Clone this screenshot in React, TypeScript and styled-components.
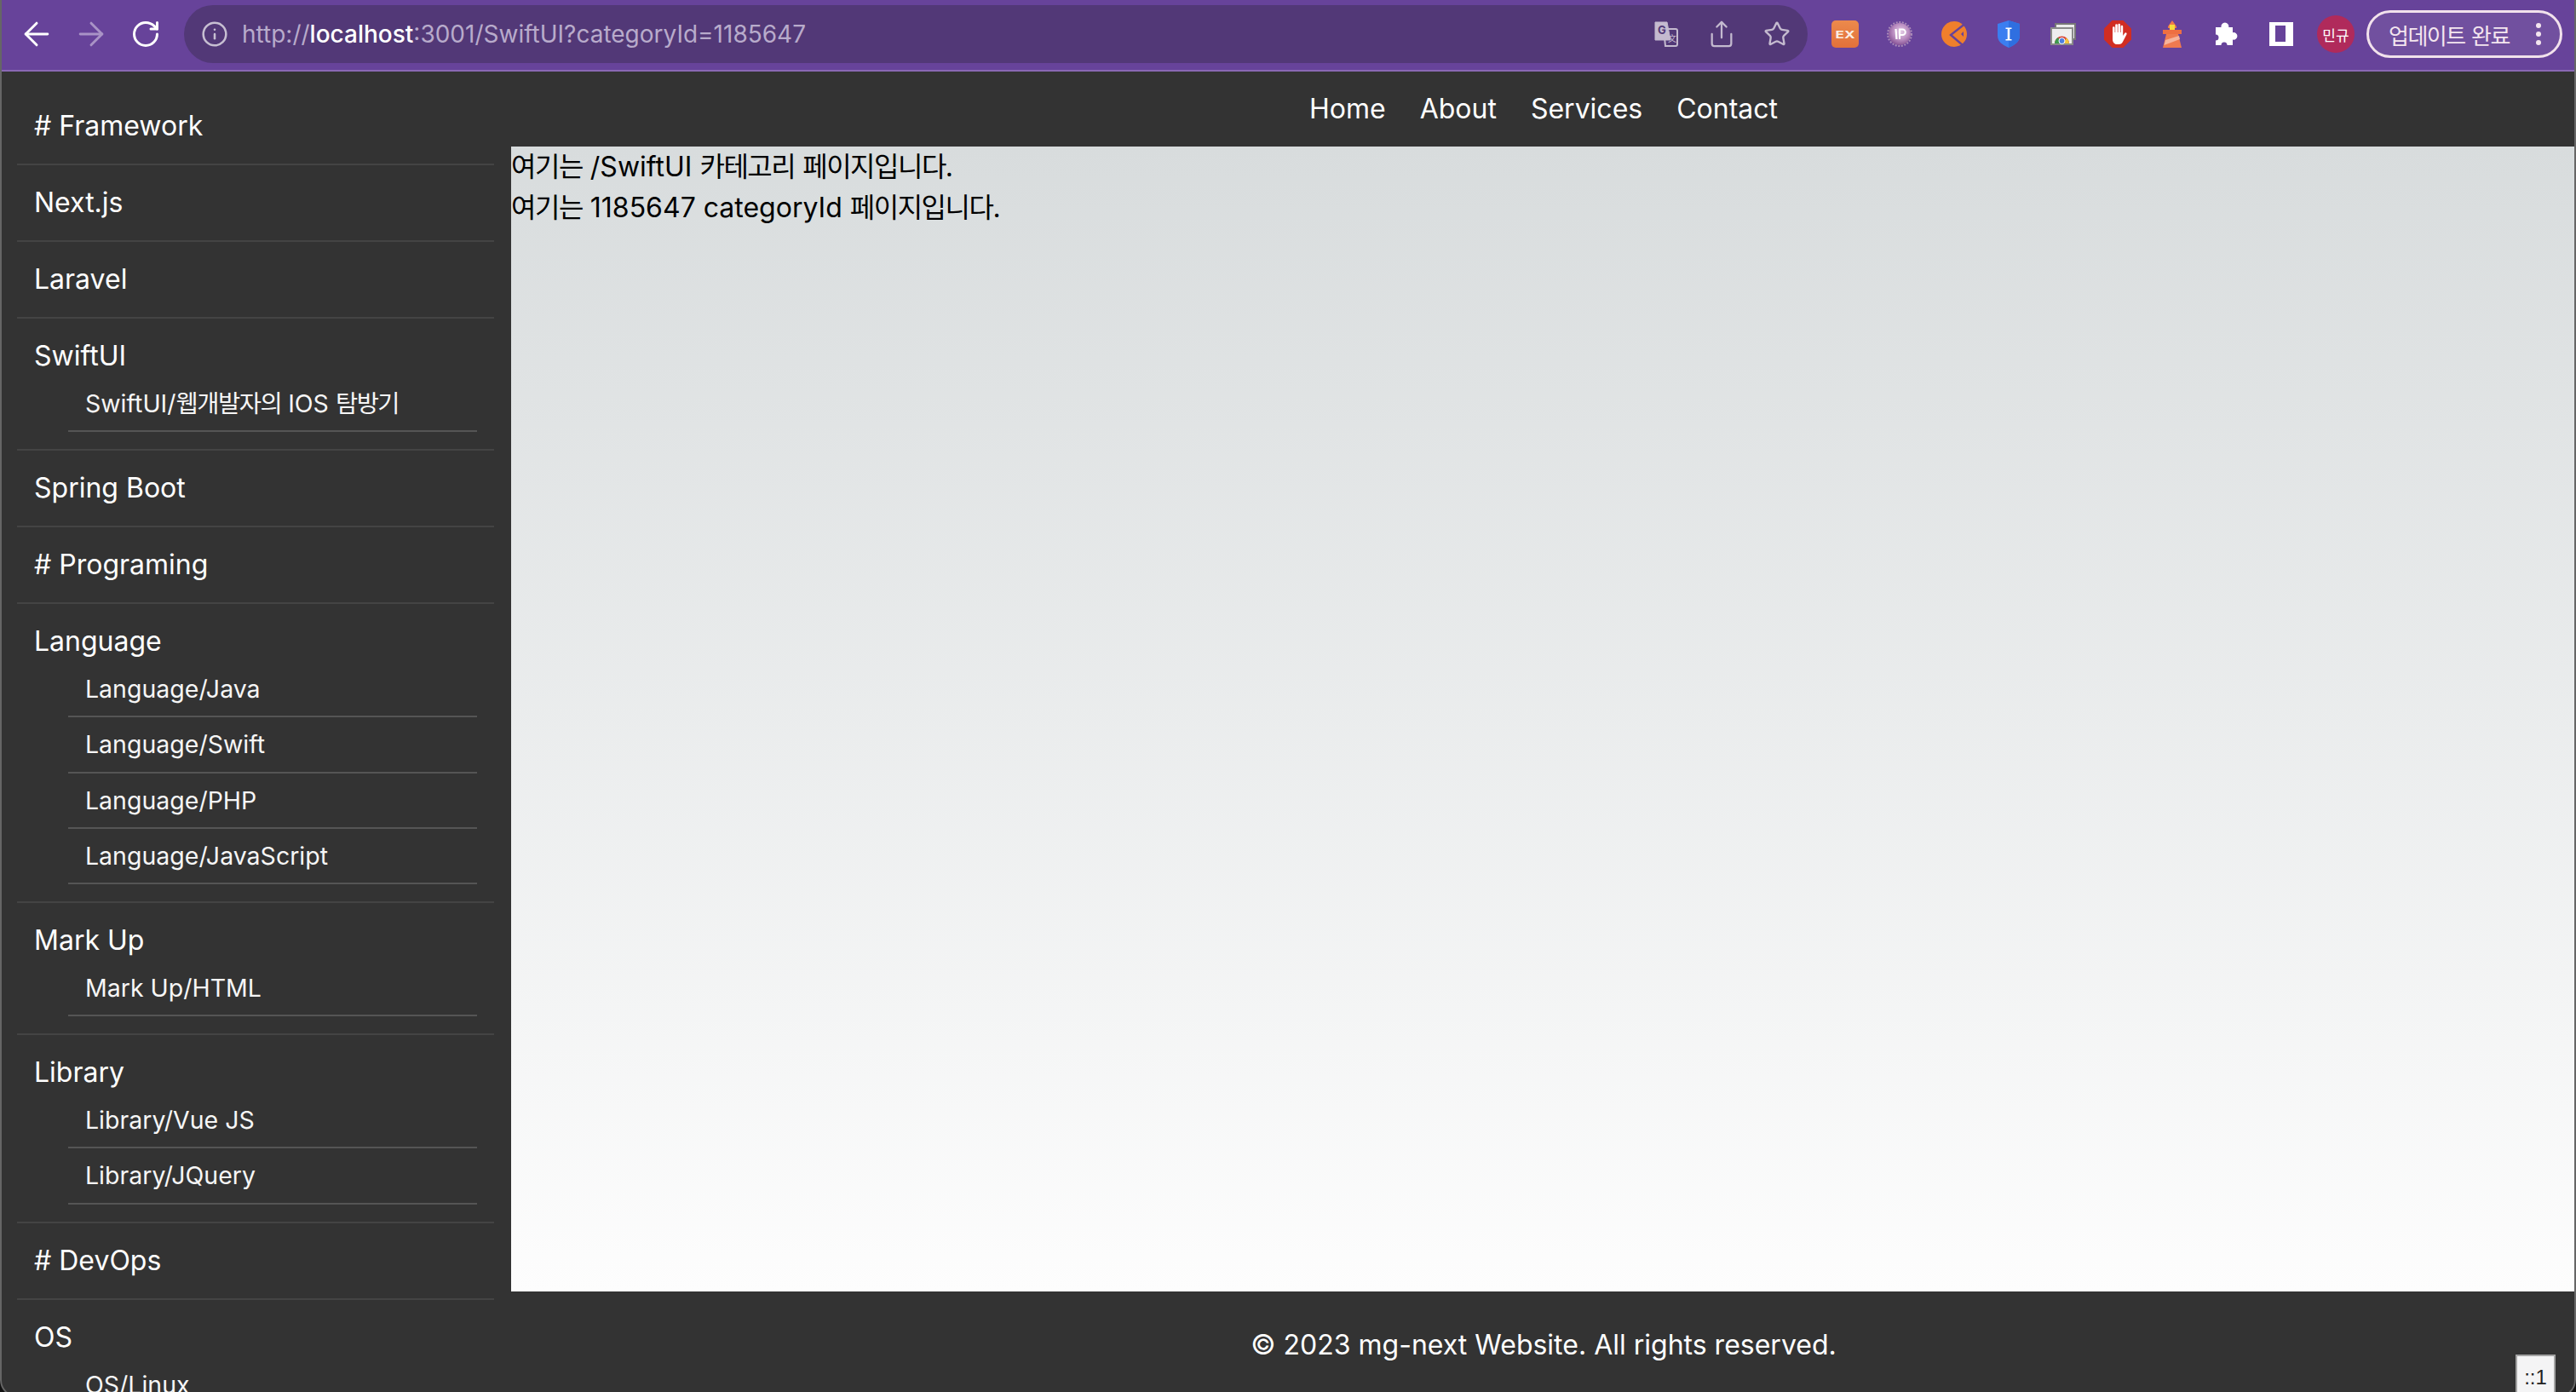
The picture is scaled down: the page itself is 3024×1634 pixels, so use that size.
import React from "react";
import styled, { createGlobalStyle } from "styled-components";
import { ArrowLeft, ArrowRight, RotateCw, Info, Share, Star } from "lucide-react";

const Global = createGlobalStyle`
  html, body { margin: 0; padding: 0; background: #111; }
  * { box-sizing: border-box; }
  ul { list-style: none; margin: 0; padding: 0; }
`;

const FONT = `Inter, "Noto Sans CJK KR", sans-serif`;

const Page = styled.div`
  width: 3024px;
  height: 1634px;
  overflow: hidden;
`;

const Win = styled.div`
  width: 3024px;
  height: 1640px;
  overflow: hidden;
  display: flex;
  flex-direction: column;
  font-family: ${FONT};
  background: #333;
  border-radius: 0 0 20px 20px;
  position: relative;
  &::after {
    content: "";
    position: absolute;
    inset: 0;
    border: 2px solid #666;
    border-top: none;
    border-radius: 0 0 20px 20px;
    pointer-events: none;
  }
`;

const Ko = styled.span`
  letter-spacing: -1.5px;
`;

const Toolbar = styled.header`
  height: 84px;
  flex: none;
  display: flex;
  align-items: flex-start;
  padding: 6px 0 0 11px;
  background: #67439a;
  border-bottom: 2px solid #8a68b4;
`;

const NavBtn = styled.div<{ $dim?: boolean }>`
  width: 64px;
  height: 68px;
  display: flex;
  align-items: center;
  justify-content: center;
  color: ${(p) => (p.$dim ? "#a993c6" : "#fff")};
`;

const Omnibox = styled.div`
  width: 1906px;
  height: 68px;
  margin-left: 13px;
  border-radius: 34px;
  background: #523877;
  display: flex;
  align-items: center;
  padding-left: 20px;
  color: #c7bfd2;
`;

const Url = styled.div`
  margin-left: 16px;
  flex: 1;
  font-size: 28px;
  color: #b8abcb;
  white-space: nowrap;
  b { font-weight: 500; color: #fff; }
`;

const OmniAction = styled.div`
  width: 65px;
  height: 68px;
  display: flex;
  align-items: center;
  justify-content: center;
  color: #c4bacf;
`;

const Omnitail = styled.div`
  display: flex;
  padding-right: 4px;
`;

const Extensions = styled.div`
  margin-left: 12px;
  height: 68px;
  display: flex;
`;

const Ext = styled.div`
  width: 64px;
  height: 68px;
  display: flex;
  align-items: center;
  justify-content: center;
  position: relative;
`;

const Avatar = styled.div`
  width: 44px;
  height: 44px;
  border-radius: 50%;
  background: #b02a5b;
  color: #fff;
  font-size: 17px;
  display: flex;
  align-items: center;
  justify-content: center;
`;

const UpdatePill = styled.div`
  margin: 6px 0 0 4px;
  width: 230px;
  height: 56px;
  border: 3px solid #f2e2ec;
  border-radius: 28px;
  background: #71509f;
  color: #f4e6ef;
  font-size: 26px;
  display: flex;
  align-items: center;
  padding-left: 23px;
  white-space: nowrap;
`;

const PillLabel = styled.span`
  width: 142px;
`;

const Dots = styled.span`
  margin-left: 31px;
  display: flex;
  flex-direction: column;
  gap: 4px;
  i { display: block; width: 6px; height: 6px; border-radius: 50%; background: #f4e6ef; }
`;

const Body = styled.div`
  flex: 1;
  min-height: 0;
  display: flex;
`;

const Sidebar = styled.aside`
  width: 600px;
  flex: none;
  padding: 20px 20px 0;
  overflow: hidden;
  color: #fff;
`;

const Item = styled.li`
  padding: 20px;
  border-bottom: 2px solid #444;
  font-size: 32px;
  line-height: 48px;
`;

const SubList = styled.ul`
  margin: 0 0 0 40px;
`;

const SubItem = styled.li`
  padding: 10px 20px;
  border-bottom: 2px solid #555;
  font-size: 28.5px;
  line-height: 43.2px;
  color: #f6f6f6;
`;

const Right = styled.div`
  flex: 1;
  min-width: 0;
  display: flex;
  flex-direction: column;
`;

const TopNav = styled.nav`
  height: 88px;
  flex: none;
  display: flex;
  align-items: center;
  justify-content: center;
  gap: 40px;
  color: #fff;
  font-size: 32px;
  padding-bottom: 2px;
`;

const Main = styled.main`
  flex: 1;
  min-height: 0;
  color: #000;
  font-size: 32px;
  line-height: 48px;
  background: linear-gradient(to bottom, #d8dcdd, #fdfdfd);
`;

const Footer = styled.footer`
  height: 124px;
  flex: none;
  display: flex;
  align-items: center;
  justify-content: center;
  color: #fff;
  font-size: 32px;
`;

const IpBadge = styled.div`
  position: absolute;
  right: 24px;
  bottom: -14px;
  width: 47px;
  height: 64px;
  border: 2px solid #a3a3a3;
  background: #f4f4f5;
  color: #222;
  font-family: "Liberation Sans", sans-serif;
  font-size: 24px;
  line-height: 28px;
  padding-top: 11px;
  text-align: center;
`;

const Hangul = ({ text }: { text: string }) => (
  <>
    {text.split(/([가-힣]+)/).map((part, i) =>
      /[가-힣]/.test(part) ? <Ko key={i}>{part}</Ko> : part
    )}
  </>
);

type Node = { t: string; subs?: string[] };
const NAV: Node[] = [
  { t: "# Framework" },
  { t: "Next.js" },
  { t: "Laravel" },
  { t: "SwiftUI", subs: ["SwiftUI/웹개발자의 IOS 탐방기"] },
  { t: "Spring Boot" },
  { t: "# Programing" },
  { t: "Language", subs: ["Language/Java", "Language/Swift", "Language/PHP", "Language/JavaScript"] },
  { t: "Mark Up", subs: ["Mark Up/HTML"] },
  { t: "Library", subs: ["Library/Vue JS", "Library/JQuery"] },
  { t: "# DevOps" },
  { t: "OS", subs: ["OS/Linux"] },
];

const TranslateIcon = () => (
  <svg width="30" height="30" viewBox="0 0 30 30">
    <path d="M12 9h14a2 2 0 0 1 2 2v16a2 2 0 0 1-2 2H14z" fill="none" stroke="#c4bacf" strokeWidth="2" />
    <path d="M2 1h14l4 21H2z" fill="#c4bacf" stroke="#c4bacf" strokeWidth="1" />
    <text x="10" y="15" fontSize="13" fontWeight="700" textAnchor="middle" fontFamily="Inter, sans-serif" fill="#523877">G</text>
    <text x="22" y="24" fontSize="10" textAnchor="middle" fontFamily="Noto Sans CJK SC, sans-serif" fill="#c4bacf">文</text>
  </svg>
);

const ExIcon = () => (
  <svg width="32" height="32" viewBox="0 0 32 32">
    <defs>
      <linearGradient id="exg" x1="0" y1="0" x2="0" y2="1">
        <stop offset="0" stopColor="#ec8a4c" />
        <stop offset="1" stopColor="#e2703a" />
      </linearGradient>
    </defs>
    <rect width="32" height="32" rx="5" fill="url(#exg)" />
    <text x="4.500" y="20.500" fontSize="12" fontWeight="700" textLength="23" lengthAdjust="spacingAndGlyphs" fontFamily="Inter, sans-serif" fill="#fbeee4">EX</text>
  </svg>
);

const IpIcon = () => (
  <svg width="30" height="30" viewBox="0 0 30 30">
    <defs>
      <radialGradient id="ipg" cx="0.55" cy="0.4" r="0.65">
        <stop offset="0" stopColor="#e6cfe8" />
        <stop offset="0.55" stopColor="#b98cc0" />
        <stop offset="1" stopColor="#7e4a8e" />
      </radialGradient>
    </defs>
    <circle cx="15" cy="15" r="13" fill="url(#ipg)" />
    <circle cx="15" cy="15" r="14" fill="none" stroke="#a98ab8" strokeWidth="2" strokeDasharray="2 1.6" />
    <path d="M10.500 9l1 12" stroke="#fff" strokeWidth="2.200" fill="none" />
    <path d="M15 21V9.500h3.500a3 3 0 0 1 0 6.500H15" stroke="#fff" strokeWidth="2" fill="none" />
  </svg>
);

const OrangeIcon = () => (
  <svg width="30" height="30" viewBox="0 0 30 30">
    <circle cx="15" cy="15" r="15" fill="#f07f2c" />
    <path d="M27 3.500 11 16l14 12" fill="none" stroke="#67439a" strokeWidth="2.400" />
    <path d="M23 15l3-3v6z" fill="#67439a" />
  </svg>
);

const ShieldIcon = () => (
  <svg width="26" height="32" viewBox="0 0 26 32">
    <path d="M13 0 26 4v14c0 7-6 11-13 14C6 29 0 25 0 18V4z" fill="#3b7ef0" />
    <path d="M13 0 26 4v14c0 7-6 11-13 14z" fill="#2f6fe0" />
    <path d="M9.500 8.500h7v1.600h-2.200v11.800h2.200v1.600h-7v-1.600h2.200V10.100H9.500z" fill="#fff" />
  </svg>
);

const WebStoreIcon = () => (
  <svg width="30" height="26" viewBox="0 0 30 26">
    <rect x="6" y="1" width="23" height="18" fill="#ececec" stroke="#777" strokeWidth="2" />
    <rect x="1" y="6" width="25" height="19" fill="#eee" stroke="#8a8a8a" strokeWidth="2" />
    <path d="M5 24a8.500 8.500 0 0 1 17 0z" fill="#d8493a" />
    <path d="M5 24a8.500 8.500 0 0 1 4-7l4 7z" fill="#3c9a4e" />
    <path d="M22 24a8.500 8.500 0 0 0-3-6.500l-4 6.500z" fill="#f2c53c" />
    <circle cx="13.500" cy="21" r="3.500" fill="#4c7fe0" stroke="#fff" strokeWidth="1" />
  </svg>
);

const AbpIcon = () => (
  <svg width="32" height="32" viewBox="0 0 32 32">
    <path d="M9.500 0h13L32 9.500v13L22.500 32h-13L0 22.500v-13z" fill="#d12d22" />
    <path d="M10 14V8.500a1.300 1.300 0 0 1 2.600 0V14h.6V5.500a1.300 1.300 0 0 1 2.600 0V14h.6V5a1.300 1.300 0 0 1 2.600 0v9h.6V7a1.300 1.300 0 0 1 2.600 0v11l2-3a1.300 1.300 0 0 1 2.200 1.400L22 25a5 5 0 0 1-4.500 3H15c-3 0-5-2.500-5-6z" fill="#fff" />
  </svg>
);

const LighthouseIcon = () => (
  <svg width="22" height="32" viewBox="0 0 22 32">
    <path d="M6 7 11 0l5 7v2H6z" fill="#ee7a4a" />
    <rect x="8" y="5" width="6" height="6" fill="#f6dd3c" />
    <rect y="11" x="0" width="22" height="5" fill="#ee6f42" />
    <path d="M4 16h14l4 16H0z" fill="#ef7a50" />
    <path d="M3 23 19 18l1 4L1.500 29z" fill="#f6b49c" />
  </svg>
);

const PuzzleIcon = () => (
  <svg width="30" height="30" viewBox="0 0 30 30">
    <path d="M2 7h6.500a4.500 4.500 0 1 1 8.800 0H22v6.200a4.300 4.300 0 1 1 0 8.300V28h-6.500a3.500 3.500 0 0 0-7 0H2v-5.500a3.500 3.500 0 0 0 0-7z" fill="#fff" />
  </svg>
);

const SidePanelIcon = () => (
  <svg width="28" height="28" viewBox="0 0 28 28">
    <path d="M0 0h28v28H0z M7 4v19h12V4z" fill="#fff" fillRule="evenodd" />
  </svg>
);

export default function App() {
  return (
    <Page>
      <Global />
      <Win>
        <Toolbar>
          <NavBtn><ArrowLeft size={44} strokeWidth={1.6} /></NavBtn>
          <NavBtn $dim><ArrowRight size={44} strokeWidth={1.6} /></NavBtn>
          <NavBtn><RotateCw size={36} strokeWidth={2} /></NavBtn>
          <Omnibox>
            <Info size={32} strokeWidth={1.9} />
            <Url>http://<b>localhost</b>:3001/SwiftUI?categoryId=1185647</Url>
            <Omnitail>
              <OmniAction><TranslateIcon /></OmniAction>
              <OmniAction><Share size={34} strokeWidth={1.6} /></OmniAction>
              <OmniAction><Star size={32} strokeWidth={1.8} /></OmniAction>
            </Omnitail>
          </Omnibox>
          <Extensions>
            <Ext><ExIcon /></Ext>
            <Ext><IpIcon /></Ext>
            <Ext><OrangeIcon /></Ext>
            <Ext><ShieldIcon /></Ext>
            <Ext><WebStoreIcon /></Ext>
            <Ext><AbpIcon /></Ext>
            <Ext><LighthouseIcon /></Ext>
            <Ext><PuzzleIcon /></Ext>
            <Ext><SidePanelIcon /></Ext>
            <Ext><Avatar>민규</Avatar></Ext>
          </Extensions>
          <UpdatePill>
            <PillLabel><Hangul text="업데이트 완료" /></PillLabel>
            <Dots><i /><i /><i /></Dots>
          </UpdatePill>
        </Toolbar>
        <Body>
          <Sidebar>
            <ul>
              {NAV.map((n) => (
                <Item key={n.t}>
                  {n.t}
                  {n.subs && (
                    <SubList>
                      {n.subs.map((s) => (
                        <SubItem key={s}><Hangul text={s} /></SubItem>
                      ))}
                    </SubList>
                  )}
                </Item>
              ))}
            </ul>
          </Sidebar>
          <Right>
            <TopNav>
              <span>Home</span>
              <span>About</span>
              <span>Services</span>
              <span>Contact</span>
            </TopNav>
            <Main>
              <div><Hangul text="여기는 /SwiftUI 카테고리 페이지입니다." /></div>
              <div><Hangul text="여기는 1185647 categoryId 페이지입니다." /></div>
            </Main>
            <Footer>© 2023 mg-next Website. All rights reserved.</Footer>
          </Right>
        </Body>
        <IpBadge>::1</IpBadge>
      </Win>
    </Page>
  );
}
